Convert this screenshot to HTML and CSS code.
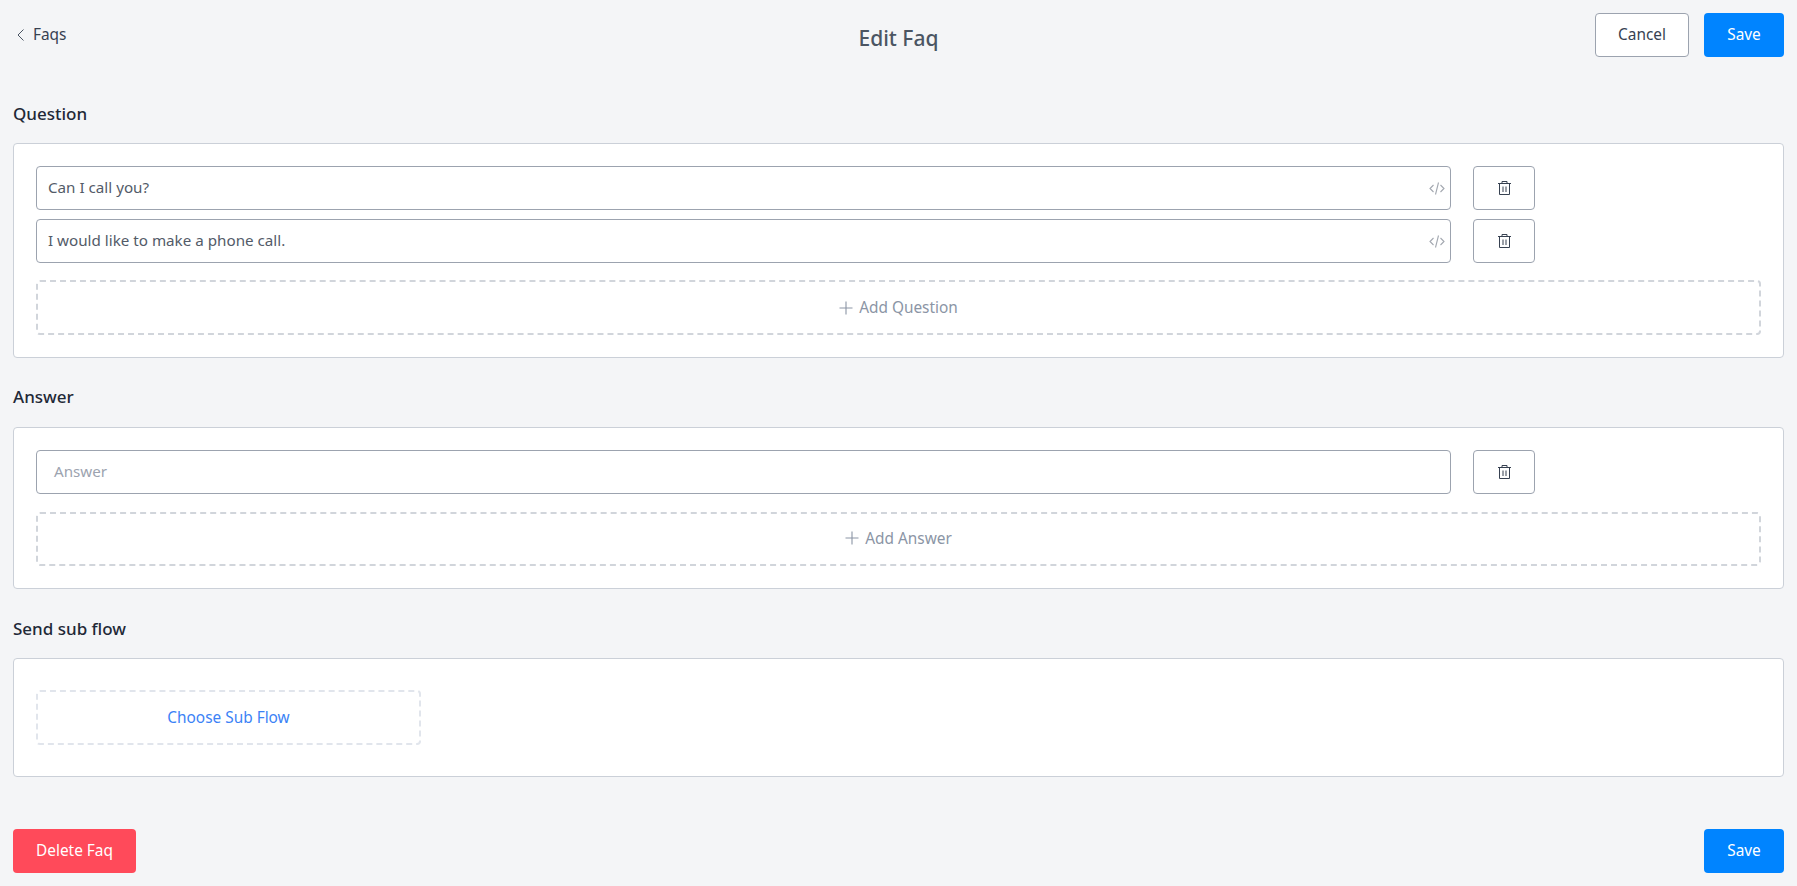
FILE: index.html
```html
<!DOCTYPE html>
<html lang="en">
<head>
<meta charset="utf-8">
<title>Edit Faq</title>
<link rel="stylesheet" href="styles.css">
</head>
<body>
<div class="page">
  <header class="topbar">
    <a class="back">
      <svg class="back-icon" width="10" height="14" viewBox="0 0 10 14"><path d="M7.500 1.500 2 7l5.500 5.500" fill="none" stroke="#4b5563" stroke-width="1"/></svg>
      <span>Faqs</span>
    </a>
    <h1 class="title">Edit Faq</h1>
    <div class="actions">
      <button class="btn btn-outline">Cancel</button>
      <button class="btn btn-primary">Save</button>
    </div>
  </header>

  <h2 class="section-title title-question">Question</h2>
  <section class="card card-question">
    <div class="row">
      <div class="field"><span class="value">Can I call you?</span>
        <svg class="code" width="16" height="13" viewBox="0 0 16 13"><path d="M4.500 3 1 6.500 4.500 10M11.500 3 15 6.500 11.500 10M9.500 .5l-3 12" fill="none" stroke="#a3a8b0" stroke-width="1.100"/></svg>
      </div>
      <button class="trash"><svg width="13" height="14" viewBox="0 0 13 14"><path d="M0 2.500h13M1.500 2.500v11h10v-11M4 2.500V.5h5v2M5 5.500v5.500M8 5.500v5.500" fill="none" stroke="#374151" stroke-width="1"/></svg></button>
    </div>
    <div class="row">
      <div class="field"><span class="value">I would like to make a phone call.</span>
        <svg class="code" width="16" height="13" viewBox="0 0 16 13"><path d="M4.500 3 1 6.500 4.500 10M11.500 3 15 6.500 11.500 10M9.500 .5l-3 12" fill="none" stroke="#a3a8b0" stroke-width="1.100"/></svg>
      </div>
      <button class="trash"><svg width="13" height="14" viewBox="0 0 13 14"><path d="M0 2.500h13M1.500 2.500v11h10v-11M4 2.500V.5h5v2M5 5.500v5.500M8 5.500v5.500" fill="none" stroke="#374151" stroke-width="1"/></svg></button>
    </div>
    <div class="add add-question">
      <svg width="14" height="14" viewBox="0 0 14 14"><path d="M7 .5v13M.5 7h13" fill="none" stroke="#8b95a5" stroke-width="1.100"/></svg>
      <span>Add Question</span>
    </div>
  </section>

  <h2 class="section-title title-answer">Answer</h2>
  <section class="card card-answer">
    <div class="row">
      <div class="field"><span class="placeholder">Answer</span></div>
      <button class="trash"><svg width="13" height="14" viewBox="0 0 13 14"><path d="M0 2.500h13M1.500 2.500v11h10v-11M4 2.500V.5h5v2M5 5.500v5.500M8 5.500v5.500" fill="none" stroke="#374151" stroke-width="1"/></svg></button>
    </div>
    <div class="add add-answer">
      <svg width="14" height="14" viewBox="0 0 14 14"><path d="M7 .5v13M.5 7h13" fill="none" stroke="#8b95a5" stroke-width="1.100"/></svg>
      <span>Add Answer</span>
    </div>
  </section>

  <h2 class="section-title title-flow">Send sub flow</h2>
  <section class="card card-flow">
    <div class="choose">Choose Sub Flow</div>
  </section>

  <footer class="footer">
    <button class="btn btn-danger">Delete Faq</button>
    <button class="btn btn-primary">Save</button>
  </footer>
</div>
</body>
</html>
```

FILE: styles.css
```css
* { box-sizing: border-box; }
html, body { margin: 0; height: 100%; }
body {
  background: #f4f5f7;
  font-family: "Noto Sans", "Open Sans", sans-serif;
  font-size: 15px;
  color: #374151;
}
.page { width: 1797px; height: 886px; padding: 13px 13px 0; overflow: hidden; }
.topbar { display: flex; justify-content: space-between; align-items: flex-start; height: 44px; position: relative; }
.back { display: flex; align-items: center; gap: 7px; padding: 12px 0 0 3px; color: #374151; font-size: 15.4px; line-height: 20px; }
.title { position: absolute; left: 0; right: 0; top: 11px; margin: 0; text-align: center; font-size: 21px; line-height: 28px; font-weight: 500; color: #4b5563; pointer-events: none; }
.actions { display: flex; gap: 15px; }
.btn { height: 44px; border-radius: 4px; font-family: inherit; font-size: 15.4px; border: 1px solid transparent; padding: 0 0 2px; }
.btn-outline { width: 94px; background: #fff; border-color: #9ca3af; color: #374151; }
.btn-primary { width: 80px; background: #0084ff; color: #fff; }
.btn-danger { width: 123px; background: #ff4a5a; color: #fff; }
.section-title { margin: 0; font-size: 17px; line-height: 22px; font-weight: 500; color: #1f2937; }
.title-question { margin-top: 46px; }
.title-answer { margin-top: 28px; }
.title-flow { margin-top: 29px; }
.card { background: #fff; border: 1px solid #cbd0d8; border-radius: 4px; padding: 22px; }
.card-question { margin-top: 18px; height: 215px; }
.card-answer { margin-top: 19px; height: 162px; }
.card-flow { margin-top: 18px; height: 119px; padding-top: 31px; }
.row { display: flex; gap: 22px; margin-bottom: 9px; }
.field { width: 1415px; height: 44px; background: #fff; border: 1px solid #9ca3af; border-radius: 4px; padding: 0 5px 0 11px; display: flex; align-items: center; justify-content: space-between; }
.value { color: #535b68; font-size: 15.2px; padding-bottom: 3px; }
.placeholder { color: #9ca3af; font-size: 15.2px; padding: 0 0 2px 6px; }
.trash { width: 62px; height: 44px; background: #fff; border: 1px solid #9ca3af; border-radius: 4px; padding: 0; display: flex; align-items: center; justify-content: center; }
.add { width: 1725px; height: 55px; border: 2px dashed #d1d5db; border-radius: 4px; display: flex; align-items: center; justify-content: center; gap: 6px; color: #8b95a5; font-size: 15.4px; }
.add-question { margin-top: 17px; }
.add-answer { margin-top: 18px; height: 54px; padding-bottom: 2px; }
.choose { width: 385px; height: 55px; border: 2px dashed #e1e5ec; border-radius: 4px; display: flex; align-items: center; justify-content: center; color: #3b82f6; font-size: 15.4px; }
.footer { display: flex; justify-content: space-between; margin-top: 52px; }
```
